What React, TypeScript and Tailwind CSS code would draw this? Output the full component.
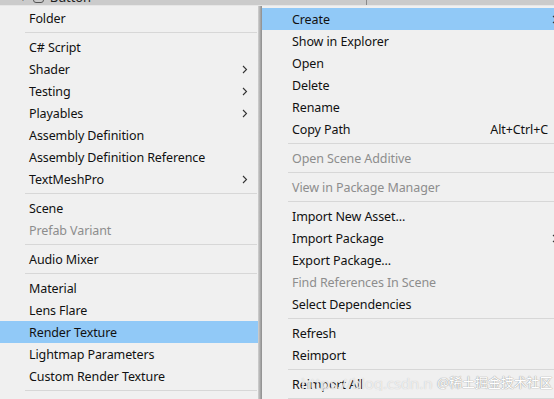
import React from "react";

type Item =
  | { kind: "sep" }
  | { kind: "item"; label: string; disabled?: boolean; sub?: boolean; active?: boolean; shortcut?: string };

const leftItems: Item[] = [
  { kind: "item", label: "Folder" },
  { kind: "sep" },
  { kind: "item", label: "C# Script" },
  { kind: "item", label: "Shader", sub: true },
  { kind: "item", label: "Testing", sub: true },
  { kind: "item", label: "Playables", sub: true },
  { kind: "item", label: "Assembly Definition" },
  { kind: "item", label: "Assembly Definition Reference" },
  { kind: "item", label: "TextMeshPro", sub: true },
  { kind: "sep" },
  { kind: "item", label: "Scene" },
  { kind: "item", label: "Prefab Variant", disabled: true },
  { kind: "sep" },
  { kind: "item", label: "Audio Mixer" },
  { kind: "sep" },
  { kind: "item", label: "Material" },
  { kind: "item", label: "Lens Flare" },
  { kind: "item", label: "Render Texture", active: true },
  { kind: "item", label: "Lightmap Parameters" },
  { kind: "item", label: "Custom Render Texture" },
  { kind: "sep" },
];

const rightItems: Item[] = [
  { kind: "item", label: "Create", sub: true, active: true },
  { kind: "item", label: "Show in Explorer" },
  { kind: "item", label: "Open" },
  { kind: "item", label: "Delete" },
  { kind: "item", label: "Rename" },
  { kind: "item", label: "Copy Path", shortcut: "Alt+Ctrl+C" },
  { kind: "sep" },
  { kind: "item", label: "Open Scene Additive", disabled: true },
  { kind: "sep" },
  { kind: "item", label: "View in Package Manager", disabled: true },
  { kind: "sep" },
  { kind: "item", label: "Import New Asset..." },
  { kind: "item", label: "Import Package", sub: true },
  { kind: "item", label: "Export Package..." },
  { kind: "item", label: "Find References In Scene", disabled: true },
  { kind: "item", label: "Select Dependencies" },
  { kind: "sep" },
  { kind: "item", label: "Refresh" },
  { kind: "item", label: "Reimport" },
  { kind: "sep" },
  { kind: "item", label: "Reimport All" },
  { kind: "sep" },
];

const Chevron = () => (
  <svg width="6" height="9" viewBox="0 0 6 9" className="shrink-0">
    <polyline points="1,1 4.5,4.5 1,8" fill="none" stroke="#333" strokeWidth="1.1" />
  </svg>
);

function Menu({ items, textPad, sepPad, arrowRight }: { items: Item[]; textPad: string; sepPad: string; arrowRight: string }) {
  return (
    <div className="flex flex-col">
      {items.map((it, i) =>
        it.kind === "sep" ? (
          <div key={i} className={`flex h-[7px] items-center ${sepPad}`}>
            <div className="h-px w-full bg-[#d7d7d7]" />
          </div>
        ) : (
          <div
            key={i}
            className={`relative flex h-[22px] items-center pt-[2px] ${textPad} ${it.active ? "bg-[#91c9f7]" : ""} ${
              it.disabled ? "text-[#8d8d8d]" : "text-[#111]"
            }`}
          >
            <span>{it.label}</span>
            {it.shortcut && <span className="absolute right-[6px]">{it.shortcut}</span>}
            {it.sub && (
              <span className={`absolute top-[7px] ${arrowRight}`}>
                <Chevron />
              </span>
            )}
          </div>
        )
      )}
    </div>
  );
}

export default function App() {
  return (
    <div className="relative h-[399px] w-[554px] overflow-hidden bg-[#f0f0f0] font-['Noto_Sans','Liberation_Sans',sans-serif] text-[12.5px] leading-none tracking-[-0.1px]">
      {/* hierarchy row peeking out above the menus */}
      <div className="relative h-[6px] overflow-hidden bg-[#cbcbcb]">
        <div className="absolute -top-[9px] left-[19px] flex items-center gap-[6px] text-[13px] text-[#222]">
          <span className="text-[8px]">▼</span>
          <span className="inline-block h-[11px] w-[11px] rounded-[3px] border border-[#555]" />
          <span>Button</span>
        </div>
        <div className="absolute left-[366px] top-0 h-full w-px bg-[#8a8a8a]" />
        <div className="absolute bottom-0 left-0 h-px w-full bg-[#e6e6e6]" />
      </div>

      <div className="flex">
        <div className="w-[258px] pt-[1px]">
          <Menu items={leftItems} textPad="pl-[29px]" sepPad="pl-[25px] pr-[1px]" arrowRight="right-[10px]" />
        </div>
        <div className="w-[4px] bg-gradient-to-r from-[#d2d2d2] to-[#8c8c8c]" />
        <div className="flex-1 pt-[2px]">
          <Menu items={rightItems} textPad="pl-[30px]" sepPad="pl-[26px]" arrowRight="-right-[4px]" />
        </div>
      </div>

      {/* watermark */}
      <span className="absolute left-[301px] top-[376px] w-[132px] overflow-hidden whitespace-nowrap text-[15px] text-white/70 [text-shadow:0_0_1px_#bbb]">
        https://blog.csdn.net
      </span>
      <span className="absolute left-[437px] top-[375px] whitespace-nowrap font-['Noto_Sans_CJK_SC',sans-serif] text-[13px] text-white [text-shadow:0_0_1px_#999,0_0_1px_#999]">
        @稀土掘金技术社区
      </span>
    </div>
  );
}
